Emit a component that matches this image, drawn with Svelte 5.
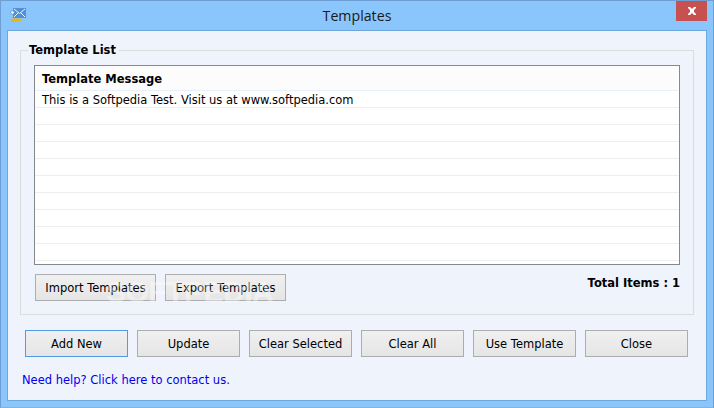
<script>
  const rows = ['This is a Softpedia Test. Visit us at www.softpedia.com', '', '', '', '', '', '', '', '', ''];
  const actions = ['Add New', 'Update', 'Clear Selected', 'Clear All', 'Use Template', 'Close'];
</script>

<div class="window">
  <header class="titlebar">
    <svg class="appicon" width="17" height="15" viewBox="0 0 17 15" aria-hidden="true">
      <rect x="3.500" y="0.500" width="12" height="9" fill="#4a90de" stroke="#5f8fc4" />
      <path d="M4 1l5.500 4.500L15 1M4 9l4-4M15 9l-4-4" fill="none" stroke="#eaf4ff" stroke-width="1" />
      <circle cx="2.500" cy="4.500" r="1.800" fill="#eef6ff" stroke="#6d8cb0" stroke-width="0.700" />
      <path d="M1 10.500h10v2l-1.500 1.500H1z" fill="#e3b81f" />
    </svg>
    <h1>Templates</h1>
    <div class="close"><svg width="10" height="8" viewBox="0 0 10 8" aria-hidden="true"><path d="M1 0h2l2 2 2-2h2v1L7 3v2l2 2v1H7L5 6 3 8H1V7l2-2V3L1 1z" fill="#fff" /></svg></div>
  </header>

  <main class="client">
    <fieldset class="group">
      <legend>Template List</legend>
      <div class="list">
        <div class="listhead">Template Message</div>
        {#each rows as row}
          <div class="row">{row}</div>
        {/each}
      </div>
      <div class="listfoot">
        <button class="small">Import Templates</button>
        <button class="small">Export Templates</button>
        <span class="total">Total Items : 1</span>
      </div>
    </fieldset>

    <div class="actions">
      {#each actions as a, i}
        <button class:focused={i === 0}>{a}</button>
      {/each}
    </div>
    <a class="help" href="#help">Need help? Click here to contact us.</a>
    <div class="watermark">SOFTPEDIA</div>
  </main>
</div>

<style>
  :global(body) { margin: 0; }
  .window {
    box-sizing: border-box;
    width: 714px;
    height: 408px;
    background: #8ac5fb;
    border: 1px solid #6f9fd2;
    border-bottom-color: #7fb4e6;
    padding: 0 6px 6px;
    display: flex;
    flex-direction: column;
    font: 11.5px/13px "DejaVu Sans", Verdana, sans-serif;
    color: #000;
  }
  .titlebar {
    height: 29px;
    flex: none;
    display: grid;
    grid-template-columns: 1fr auto 1fr;
    align-items: start;
  }
  .appicon { margin: 7px 0 0 3px; }
  h1 {
    margin: 0;
    padding-top: 5px;
    font: 400 14.200px/19px "Open Sans", "Liberation Sans", sans-serif;
    color: #1a1a1a;
  }
  .close {
    justify-self: end;
    width: 31px;
    height: 20px;
    background: #c75050;
    display: flex;
    align-items: center;
    justify-content: center;
  }
  .client {
    position: relative;
    flex: 1;
    box-sizing: border-box;
    background: #eff3fc;
    border: 1px solid #6fa6dc;
    padding: 13px 12px 0 12px;
    display: flex;
    flex-direction: column;
    overflow: hidden;
  }
  .group {
    margin: 0;
    box-sizing: border-box;
    width: 674px;
    height: 271px;
    border: 1px solid #dcdcdc;
    padding: 8px 13px 0 13px;
    min-width: 0;
  }
  legend {
    padding: 0 3px 0 1px;
    margin-left: -6px;
    font-weight: 700;
    line-height: 13px;
  }
  .list {
    box-sizing: border-box;
    width: 646px;
    height: 200px;
    background: #fff;
    border: 1px solid #85888e;
    overflow: hidden;
  }
  .listhead {
    box-sizing: border-box;
    height: 25px;
    margin-right: 1px;
    padding: 7px 0 0 7px;
    font-weight: 700;
    background: #fcfcfc;
    border-bottom: 1px solid #e6f0fa;
  }
  .row {
    box-sizing: border-box;
    height: 17px;
    padding: 3px 0 0 7px;
    border-bottom: 1px solid #eeeeee;
  }
  .listfoot {
    margin-top: 9px;
    display: flex;
    gap: 9px;
    width: 646px;
    padding-left: 1px;
    box-sizing: border-box;
    align-items: flex-start;
  }
  .total {
    margin-left: auto;
    font-weight: 700;
    padding-top: 3px;
  }
  button {
    box-sizing: border-box;
    width: 103px;
    height: 27px;
    padding: 2px 0 0;
    border: 1px solid #adadad;
    border-radius: 0;
    background: linear-gradient(#f0f0f0, #e5e5e5);
    font: 11.5px/13px "DejaVu Sans", Verdana, sans-serif;
    color: #000;
  }
  button.small { width: 121px; }
  button.focused { border-color: #4f9be6; }
  .actions {
    display: flex;
    gap: 9px;
    margin-top: 15px;
    padding-left: 5px;
  }
  .help {
    margin: 17px 0 0 2px;
    color: #0000ee;
    text-decoration: none;
  }
  .watermark {
    position: absolute;
    left: 98px;
    top: 244px;
    font: 700 30px/34px "Liberation Sans", sans-serif;
    letter-spacing: -0.500px;
    color: rgba(255, 255, 255, 0.4);
    pointer-events: none;
  }
</style>
